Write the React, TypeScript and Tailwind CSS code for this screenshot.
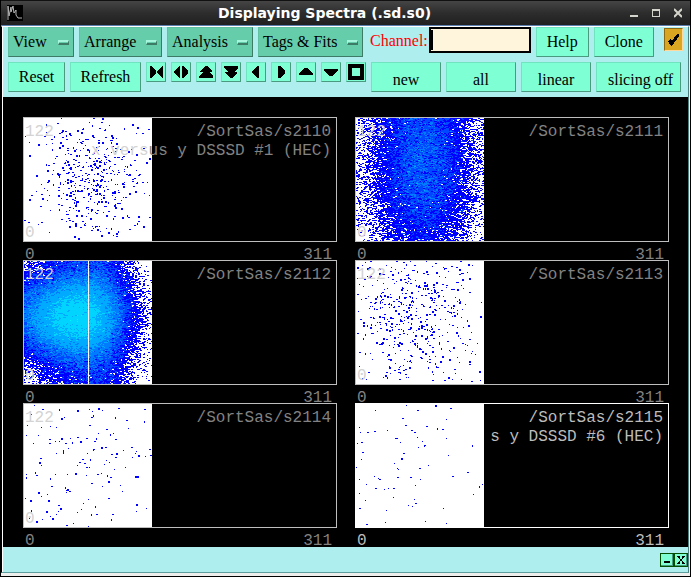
import { useMemo } from "react"
import type { ReactNode } from "react"

const PLOT_W = 128
const PLOT_H = 123

type Dot = [number, number, number]

// size codes: 1 = 1x1, 2 = 2x1, 3 = 1x2, 4 = 2x2
const SIZES = [
  [0, 0],
  [1, 1],
  [2, 1],
  [1, 2],
  [2, 2],
]

const LEVELS = ["#0000ff", "#0048ff", "#007cff", "#00aaff", "#00d4ff", "#00f4ff"]

const dots2114: Dot[] = [
  [10, 1, 1], [18, 5, 2], [35, 5, 3], [53, 6, 4], [65, 5, 1], [68, 7, 1], [74, 4, 4], [78, 6, 1], [94, 4, 2], [120, 5, 2],
  [69, 11, 3], [67, 13, 2], [7, 10, 1], [37, 14, 4], [40, 13, 1], [91, 13, 3], [102, 16, 2], [120, 17, 3], [3, 21, 1], [17, 23, 1],
  [26, 22, 1], [32, 23, 1], [65, 21, 2], [104, 24, 1], [82, 25, 2], [89, 29, 1], [74, 29, 1], [86, 30, 3], [2, 31, 1], [14, 31, 1],
  [25, 35, 2], [37, 34, 4], [46, 34, 1], [53, 33, 2], [62, 34, 2], [72, 34, 3], [91, 35, 2], [9, 39, 1], [25, 39, 2], [31, 37, 1],
  [35, 37, 1], [41, 39, 2], [48, 38, 3], [56, 37, 4], [70, 37, 2], [44, 44, 1], [39, 46, 3], [39, 48, 3], [32, 49, 1], [63, 49, 1],
  [69, 45, 3], [70, 45, 1], [77, 43, 4], [81, 43, 2], [99, 46, 1], [107, 43, 2], [125, 45, 2], [111, 49, 1], [112, 47, 1], [114, 51, 4],
  [121, 52, 1], [126, 51, 2], [108, 53, 1], [87, 50, 2], [92, 49, 4], [91, 53, 2], [16, 54, 2], [15, 58, 4], [17, 61, 1], [58, 55, 2],
  [66, 55, 3], [55, 58, 2], [53, 61, 1], [60, 59, 2], [62, 63, 2], [65, 63, 1], [82, 56, 1], [85, 58, 1], [80, 60, 1], [101, 63, 1],
  [90, 65, 1], [2, 70, 1], [2, 73, 3], [11, 68, 3], [12, 71, 2], [31, 70, 1], [43, 70, 1], [51, 69, 4], [26, 74, 3], [62, 71, 1],
  [73, 70, 2], [77, 69, 1], [83, 71, 3], [86, 73, 2], [84, 77, 4], [111, 72, 4], [113, 72, 4], [67, 79, 2], [78, 82, 1], [96, 81, 1],
  [98, 87, 1], [27, 82, 2], [41, 83, 3], [43, 85, 4], [42, 86, 1], [45, 87, 2], [42, 88, 1], [14, 88, 4], [23, 90, 1], [17, 92, 1],
  [1, 94, 1], [6, 96, 4], [24, 96, 4], [64, 95, 1], [84, 94, 2], [59, 99, 1], [112, 100, 4], [122, 104, 1], [34, 101, 2], [36, 104, 4],
  [57, 105, 1], [71, 102, 3], [53, 108, 1], [112, 107, 1], [22, 107, 4], [7, 106, 3], [34, 107, 1], [32, 110, 1], [26, 112, 1], [28, 114, 4],
  [67, 110, 3], [72, 110, 2], [88, 110, 2], [87, 115, 3], [18, 115, 1], [5, 114, 1], [12, 117, 4], [49, 119, 1], [42, 121, 2], [64, 122, 1],
]

const dots2115: Dot[] = [
  [50, 1, 1], [79, 1, 4], [94, 4, 2], [19, 6, 1], [61, 6, 2], [46, 14, 2], [90, 15, 1], [49, 21, 2], [70, 22, 2], [3, 23, 1],
  [81, 24, 3], [86, 25, 2], [31, 26, 1], [18, 27, 2], [55, 26, 2], [58, 28, 2], [4, 28, 1], [11, 28, 2], [61, 33, 1], [39, 34, 2],
  [41, 34, 1], [90, 34, 1], [66, 37, 1], [44, 38, 1], [1, 39, 1], [5, 38, 2], [68, 41, 2], [68, 42, 1], [62, 43, 1], [116, 41, 3],
  [6, 48, 2], [47, 49, 2], [92, 51, 1], [45, 54, 4], [5, 55, 1], [38, 59, 1], [72, 61, 1], [0, 63, 1], [41, 64, 1], [42, 65, 1],
  [63, 64, 2], [111, 68, 2], [18, 72, 1], [41, 73, 2], [54, 73, 2], [96, 72, 2], [22, 74, 1], [23, 75, 2], [3, 75, 1], [64, 75, 1],
  [10, 80, 1], [59, 81, 1], [126, 80, 1], [123, 82, 3], [19, 84, 2], [28, 85, 1], [32, 84, 1], [37, 84, 2], [3, 89, 1], [117, 90, 1],
  [37, 93, 1], [58, 95, 1], [9, 96, 1], [59, 99, 2], [52, 101, 1], [56, 102, 1], [3, 104, 2], [87, 104, 1], [30, 106, 1], [69, 117, 1],
  [29, 118, 1], [90, 119, 1], [10, 120, 2],
]

function makeRandom(seed: number) {
  let s = seed
  return () => {
    s = (s + 0x6d2b79f5) | 0
    let t = Math.imul(s ^ (s >>> 15), 1 | s)
    t = (t + Math.imul(t ^ (t >>> 7), 61 | t)) ^ t
    return ((t ^ (t >>> 14)) >>> 0) / 4294967296
  }
}

function gauss(rand: () => number) {
  return Math.sqrt(-2 * Math.log(1 - rand())) * Math.cos(2 * Math.PI * rand())
}

function bell(v: number, center: number, sigma: number) {
  return Math.exp(-0.5 * ((v - center) / sigma) ** 2)
}

function dotsToPath(dots: Dot[]) {
  return dots
    .map(([x, y, size]) => {
      const [w, h] = SIZES[size]
      return `M${x} ${y}h${w}v${h}h-${w}z`
    })
    .join("")
}

// a cloud of single hits over a flat background
function cloud(seed: number, core: number, flat: number, cx: number, cy: number, sx: number, sy: number) {
  const rand = makeRandom(seed)
  const dots: Dot[] = []
  for (let i = 0; i < core + flat; i++) {
    const x = Math.floor(i < core ? cx + gauss(rand) * sx : rand() * 126)
    const y = Math.floor(i < core ? cy + gauss(rand) * sy : rand() * 121)
    const r = rand()
    const size = r < 0.38 ? 1 : r < 0.68 ? 2 : r < 0.78 ? 3 : 4
    if (x >= 0 && x < 126 && y >= 0 && y < 121) dots.push([x, y, size])
  }
  return [dotsToPath(dots)]
}

// one path per colour level, counts drawn around the given intensity
function density(seed: number, intensity: (x: number, y: number) => number) {
  const rand = makeRandom(seed)
  const paths = LEVELS.map(() => "")
  const limits = [1, 4, 8, 14, 25, 44]
  for (let y = 0; y < PLOT_H; y++) {
    let x = 0
    while (x < PLOT_W) {
      const w = rand() < 0.45 && x < PLOT_W - 1 ? 2 : 1
      const mean = intensity(x, y)
      let count = 0
      if (mean > 10) {
        count = Math.round(mean + gauss(rand) * Math.sqrt(mean) * 0.8)
      } else {
        const stop = Math.exp(-mean)
        let p = rand()
        while (p > stop) {
          count++
          p *= rand()
        }
      }
      let level = -1
      limits.forEach((limit, i) => {
        if (count >= limit) level = i
      })
      if (level >= 0) paths[level] += `M${x} ${y}h${w}v1h-${w}z`
      x += w
    }
  }
  return paths
}

const spectra = [
  {
    name: "/SortSas/s2110",
    title: ["x vers", "us y DSSSD #1 (HEC)"],
    build: () => cloud(11, 370, 110, 65, 60, 24, 31),
  },
  {
    name: "/SortSas/s2111",
    build: () =>
      density(21, (x, y) => 6.4 * bell(x, 66, 24) * bell(y, 52, y < 52 ? 80 : 48) + 0.5 * bell(x, 60, 40) * bell(y, 40, 40)),
  },
  {
    name: "/SortSas/s2112",
    line: true,
    build: () =>
      density(
        31,
        (x, y) => 29 * bell(x, 52, x < 52 ? 34 : 24) * bell(y, 55, 22) + 6 * bell(x, 74, x < 74 ? 30 : 16) * bell(y, 56, 64),
      ),
  },
  { name: "/SortSas/s2113", build: () => cloud(41, 370, 170, 56, 50, 28, 32) },
  { name: "/SortSas/s2114", build: () => [dotsToPath(dots2114)] },
  {
    name: "/SortSas/s2115",
    title: ["", "s y DSSSD #6 (HEC)"],
    selected: true,
    build: () => [dotsToPath(dots2115)],
  },
]

type Spectrum = {
  name: string
  title?: string[]
  line?: boolean
  selected?: boolean
  build: () => string[]
}

function SpectrumPlot({ spectrum }: { spectrum: Spectrum }) {
  const { name, title, line, selected, build } = spectrum
  const paths = useMemo(() => build(), [build])
  const textColor = selected ? "text-[#bcbcbc]" : "text-[#828282]"

  return (
    <div className={`font-['Liberation_Mono',monospace] text-[16px] ${textColor}`}>
      <div className={`relative h-[125px] border ${selected ? "border-white" : "border-[#bebebe]"}`}>
        <svg width={PLOT_W} height={PLOT_H} className="block" shapeRendering="crispEdges">
          <rect width={PLOT_W} height={PLOT_H} fill="#ffffff" />
          {paths.map((d, i) => (
            <path key={i} d={d} fill={LEVELS[i]} />
          ))}
          {line && <rect x="64" width="1" height={PLOT_H} fill="#ffffff" />}
        </svg>
        {!selected && (
          <div className="absolute inset-y-0 left-px flex flex-col justify-between pt-[5px] leading-[19px] text-[#d3d3d3]">
            <span>122</span>
            <span className="-mb-0.5">0</span>
          </div>
        )}
        <div className="absolute top-[5px] right-[5px] text-right leading-[19px] whitespace-pre">
          <div>{name}</div>
          {title && (
            <div>
              <span className="text-[#d3d3d3]">{title[0]}</span>
              {title[1]}
            </div>
          )}
        </div>
      </div>
      <div className="flex h-[18px] justify-between pt-1 pr-[5px] pl-0.5 leading-[19px]">
        <span>0</span>
        <span>311</span>
      </div>
    </div>
  )
}

const bevel = "border border-t-[#70e4bf] border-l-[#70e4bf] border-r-[#4a9a80] border-b-[#4a9a80]"

function PushButton({ className = "", children }: { className?: string; children: ReactNode }) {
  return (
    <button type="button" className={`h-[30px] shrink-0 bg-[#7fffd4] ${bevel} ${className}`}>
      {children}
    </button>
  )
}

function MenuButton({ className, children }: { className: string; children: ReactNode }) {
  return (
    <button
      type="button"
      className={`flex h-[30px] shrink-0 items-center justify-between border border-[#60c0a0] border-r-[#3d7b66] border-b-[#3d7b66] bg-[#66cdaa] pr-1 pl-1 ${className}`}
    >
      {children}
      <span className="h-[5px] w-[11px] border-t-2 border-r border-b-2 border-l border-t-[#a5f5dd] border-r-[#3d7b66] border-b-[#3d7b66] border-l-[#a5f5dd]" />
    </button>
  )
}

const arrows = [
  { label: "Shrink", d: "M3 3h1l5 5v2l-5 5h-1zM16 3h-1l-5 5v2l5 5h1z" },
  { label: "Expand", d: "M8 3v12h-1l-5 -5v-2l5 -5zM10 3v12h1l5 -5v-2l-5 -5z" },
  { label: "Page up", d: "M8 3h2l5 5v1h-3l4 4v2h-14v-2l4 -4h-3v-1z" },
  { label: "Page down", d: "M8 15h2l5 -5v-1h-3l4 -4v-2h-14v2l4 4h-3v1z" },
  { label: "Left", d: "M12 3v12h-2l-5 -5v-2l5 -5z" },
  { label: "Right", d: "M6 3v12h2l5 -5v-2l-5 -5z" },
  { label: "Up", d: "M8 5h2l6 5v2h-14v-2z" },
  { label: "Down", d: "M8 13h2l6 -5v-2h-14v2z" },
  { label: "Full", d: "M1 1h16v16h-16zM5 5v8h8v-8z" },
]

export default function App() {
  return (
    <main className="min-h-screen border-x border-b border-black bg-[#eeeeec] pr-px font-['Liberation_Serif',serif] text-[16px] leading-5 text-black">
      <header className="-mr-px flex h-[26px] items-center border-t border-b border-t-[#111111] border-b-[#5a7fae] bg-linear-to-b from-[#454545] via-[#2d2d2d] to-[#202020] pr-2 pl-1.5">
        <svg width="16" height="16" viewBox="0 0 16 16" className="bg-black">
          <path d="M1 15V1L2 11L4 2V7L6 1L7 8L9 5V10L11 13H15" fill="none" stroke="#b4b4b4" strokeWidth="1" />
        </svg>
        <h1 className="flex-1 pr-1 text-center font-['DejaVu_Sans',sans-serif] text-[14px] leading-4 font-bold text-white">
          Displaying Spectra (.sd.s0)
        </h1>
        <div className="flex gap-3.5 text-[#d4d4cc]">
          <button type="button" aria-label="Minimize">
            <svg width="8" height="10" className="block" fill="currentColor">
              <rect y="7" width="8" height="2" />
            </svg>
          </button>
          <button type="button" aria-label="Maximize">
            <svg width="8" height="10" className="block" fill="currentColor" shapeRendering="crispEdges">
              <path d="M0 1H8V9H0ZM1 3V8H7V3Z" fillRule="evenodd" />
            </svg>
          </button>
          <button type="button" aria-label="Close">
            <svg width="8" height="10" className="block" fill="none" stroke="currentColor" strokeWidth="2">
              <path d="M0 1L8 9M8 1L0 9" />
            </svg>
          </button>
        </div>
      </header>

      <div className="border-t border-r border-b border-l border-t-white border-r-[#4f8080] border-b-[#5f9ea0] border-l-black">
        <div className="border-l border-white bg-[#afeeee]">
          <div className="px-[5px] pb-[5px]">
            <div className="flex">
              <div className="flex gap-[5px]">
                <MenuButton className="w-[66px]">View</MenuButton>
                <MenuButton className="w-[83px]">Arrange</MenuButton>
                <MenuButton className="w-[86px]">Analysis</MenuButton>
                <MenuButton className="w-[105px]">Tags &amp; Fits</MenuButton>
              </div>
              <label htmlFor="channel" className="pt-1 pr-px pl-[7px] leading-[19px] text-[#ff0000]">
                Channel:
              </label>
              <div className="flex h-[26px] w-[102px] items-center border-2 border-black bg-[#fff5dc]">
                <span className="h-5 w-0.5 bg-black" />
                <input id="channel" className="h-full w-full min-w-0 bg-transparent px-0.5 outline-none" />
              </div>
              <div className="flex gap-[5px] pl-[5px]">
                <PushButton className="w-[53px]">Help</PushButton>
                <PushButton className="w-[60px]">Clone</PushButton>
              </div>
              <button
                type="button"
                aria-label="Pin"
                className="mt-px ml-auto h-[23px] w-[19px] border border-t-[#8b6914] border-r-[#ffd9a0] border-b-[#ffd9a0] border-l-[#8b6914] bg-[#daa520]"
              >
                <svg width="17" height="20" viewBox="0 0 17 20">
                  <path d="M3 11L5 9L7 11L12 4H14V6L7 16H6Z" fill="#000000" shapeRendering="crispEdges" />
                </svg>
              </button>
            </div>

            <div className="mt-[5px] flex gap-[5px]">
              <PushButton className="w-[57px]">Reset</PushButton>
              <PushButton className="w-[71px]">Refresh</PushButton>
              {arrows.map((arrow) => (
                <button
                  key={arrow.label}
                  type="button"
                  aria-label={arrow.label}
                  className={`size-5 shrink-0 bg-[#7fffd4] ${bevel}`}
                >
                  <svg width="18" height="18" className="block" shapeRendering="crispEdges">
                    <path d={arrow.d} fill="#000000" fillRule="evenodd" />
                  </svg>
                </button>
              ))}
              <PushButton className="w-[70px] pt-1.5">new</PushButton>
              <PushButton className="w-[70px] pt-1.5">all</PushButton>
              <PushButton className="w-[70px] pt-1.5">linear</PushButton>
              <PushButton className="w-[85px] pt-1.5 pl-1">slicing off</PushButton>
            </div>
          </div>

          <div className="grid grid-cols-2 gap-x-[18px] bg-black pt-5 pr-[19px] pb-px pl-5">
            {spectra.map((spectrum) => (
              <SpectrumPlot key={spectrum.name} spectrum={spectrum} />
            ))}
          </div>

          <footer className="flex h-[25px] items-center justify-end">
            <button type="button" aria-label="Iconify" className="size-3.5 border border-[#005000] bg-[#7fffd4]">
              <svg width="12" height="12" className="block" shapeRendering="crispEdges">
                <path d="M11 0V11H0" fill="none" stroke="#4a9a80" />
                <rect x="3" y="7" width="6" height="2" fill="#000000" />
              </svg>
            </button>
            <button type="button" aria-label="Close panel" className="size-3.5 border border-[#005000] bg-[#7fffd4]">
              <svg width="12" height="12" className="block" shapeRendering="crispEdges">
                <path d="M11 0h1v12h-12v-1h11z" fill="#4a9a80" />
                <path
                  d="M2 2h3v1h-3zM7 2h3v1h-3zM3 3h2v1h-2zM7 3h2v1h-2zM4 4h1v1h-1zM7 4h1v1h-1zM5 5h2v2h-2zM4 7h1v1h-1zM7 7h1v1h-1zM3 8h2v1h-2zM7 8h2v1h-2zM2 9h3v1h-3zM7 9h3v1h-3z"
                  fill="#000000"
                />
              </svg>
            </button>
          </footer>
        </div>
      </div>
    </main>
  )
}
